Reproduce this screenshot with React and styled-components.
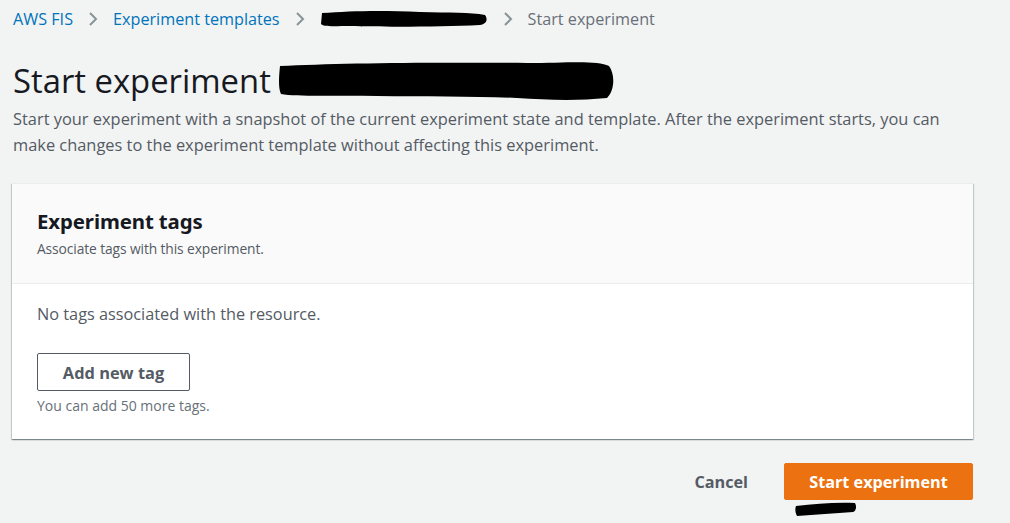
import React from "react";
import styled, { createGlobalStyle } from "styled-components";

const Global = createGlobalStyle`
  html, body { margin: 0; padding: 0; background: #f2f3f3; }
  body { font-family: "Open Sans", "Noto Sans", sans-serif; color: #16191f; }
  * { box-sizing: border-box; }
`;

const Page = styled.div`
  width: 1010px;
  height: 523px;
  padding: 0 37px 0 13px;
  overflow: hidden;
  position: relative;
`;

const Crumbs = styled.nav`
  display: flex;
  align-items: center;
  height: 38px;
  font-size: 16.2px;
`;

const CrumbLink = styled.a`
  color: #0073bb;
  text-decoration: none;
`;

const CrumbCurrent = styled.span`
  color: #687078;
`;

const Sep = styled.span`
  display: inline-flex;
  width: 40px;
  justify-content: center;
  color: #879596;
`;

const Redact = styled.svg`
  display: block;
  flex: none;
`;

const TitleRow = styled.div`
  display: flex;
  align-items: center;
  margin-top: 22px;
  gap: 6px;
`;

const Title = styled.h1`
  margin: 0;
  font-size: 32.8px;
  font-weight: 400;
  line-height: 40px;
`;

const Desc = styled.p`
  margin: 4px 0 0;
  font-size: 16.4px;
  line-height: 26px;
  color: #545b64;
  width: 945px;
`;

const Card = styled.section`
  margin-top: 25px;
  margin-left: -1px;
  background: #fff;
  box-shadow: 0 1px 1px 0 rgba(0, 28, 36, 0.3), 1px 1px 1px 0 rgba(0, 28, 36, 0.15), -1px 1px 1px 0 rgba(0, 28, 36, 0.15);
  border-top: 1px solid #eaeded;
`;

const CardHeader = styled.header`
  background: #fafafa;
  border-bottom: 1px solid #eaeded;
  padding: 24px 25px 25px;
  height: 100px;
`;

const CardTitle = styled.h2`
  margin: 0;
  font-size: 20.4px;
  font-weight: 700;
  line-height: 26px;
  letter-spacing: -0.1px;
  font-family: "Noto Sans", "Open Sans", sans-serif;
`;

const CardSub = styled.div`
  margin-top: 6px;
  font-size: 13.8px;
  color: #545b64;
  line-height: 18px;
  letter-spacing: -0.1px;
`;

const CardBody = styled.div`
  padding: 18px 25px 24px;
`;

const Empty = styled.div`
  font-size: 16.3px;
  line-height: 24px;
  color: #545b64;
`;

const OutlineButton = styled.button`
  margin-top: 27px;
  display: block;
  width: 153px;
  height: 38px;
  border: 1px solid #545b64;
  border-radius: 2px;
  background: #fff;
  color: #545b64;
  font-family: inherit;
  font-weight: 700;
  font-size: 16.4px;
`;

const Hint = styled.div`
  margin-top: 6px;
  font-size: 14px;
  color: #687078;
  line-height: 18px;
`;

const Actions = styled.div`
  display: flex;
  justify-content: flex-end;
  align-items: center;
  margin-top: 24px;
  gap: 36px;
  position: relative;
`;

const TextButton = styled.button`
  border: none;
  background: none;
  padding: 0;
  font-family: inherit;
  font-size: 16.2px;
  font-weight: 700;
  color: #545b64;
`;

const Primary = styled.button`
  width: 189px;
  height: 37px;
  border: 1px solid #ec7211;
  border-radius: 2px;
  background: #ec7211;
  color: #fff;
  font-family: inherit;
  font-size: 16.2px;
  font-weight: 700;
`;

const UnderMark = styled.svg`
  position: absolute;
  right: 116px;
  top: 38px;
`;

const Chevron = () => (
  <Sep>
    <svg width="10" height="16" viewBox="0 0 10 16">
      <path d="M2 2 L8 8 L2 14" fill="none" stroke="#879596" strokeWidth="2" />
    </svg>
  </Sep>
);

export default function App() {
  return (
    <>
      <Global />
      <Page>
        <Crumbs>
          <CrumbLink href="#">AWS FIS</CrumbLink>
          <Chevron />
          <CrumbLink href="#">Experiment templates</CrumbLink>
          <Chevron />
          <Redact width="168" height="18" viewBox="0 0 168 18">
            <path d="M2 3 C30 1 60 0 100 2 C130 3 150 2 165 5 C168 9 167 14 160 15 C120 17 60 17 30 16 C15 16 3 17 1 14 Z" fill="#000" />
          </Redact>
          <Chevron />
          <CrumbCurrent>Start experiment</CrumbCurrent>
        </Crumbs>
        <TitleRow>
          <Title>Start experiment</Title>
          <Redact width="338" height="42" viewBox="0 0 338 42">
            <path d="M3 6 C60 3 150 2 250 3 C290 3 320 0 332 6 C338 14 338 30 330 38 C300 41 270 40 240 38 C200 36 150 37 100 36 C60 35 20 37 4 34 C1 28 2 16 3 6 Z" fill="#000" />
          </Redact>
        </TitleRow>
        <Desc>
          Start your experiment with a snapshot of the current experiment state and template. After the experiment starts, you can make changes to the experiment template without affecting this experiment.
        </Desc>
        <Card>
          <CardHeader>
            <CardTitle>Experiment tags</CardTitle>
            <CardSub>Associate tags with this experiment.</CardSub>
          </CardHeader>
          <CardBody>
            <Empty>No tags associated with the resource.</Empty>
            <OutlineButton>Add new tag</OutlineButton>
            <Hint>You can add 50 more tags.</Hint>
          </CardBody>
        </Card>
        <Actions>
          <TextButton>Cancel</TextButton>
          <Primary>Start experiment</Primary>
          <UnderMark width="62" height="16" viewBox="0 0 62 16">
            <path d="M1 5 C20 3 40 1 60 2 C62 6 61 10 58 11 C40 12 20 14 2 15 C0 11 0 8 1 5 Z" fill="#000" />
          </UnderMark>
        </Actions>
      </Page>
    </>
  );
}
